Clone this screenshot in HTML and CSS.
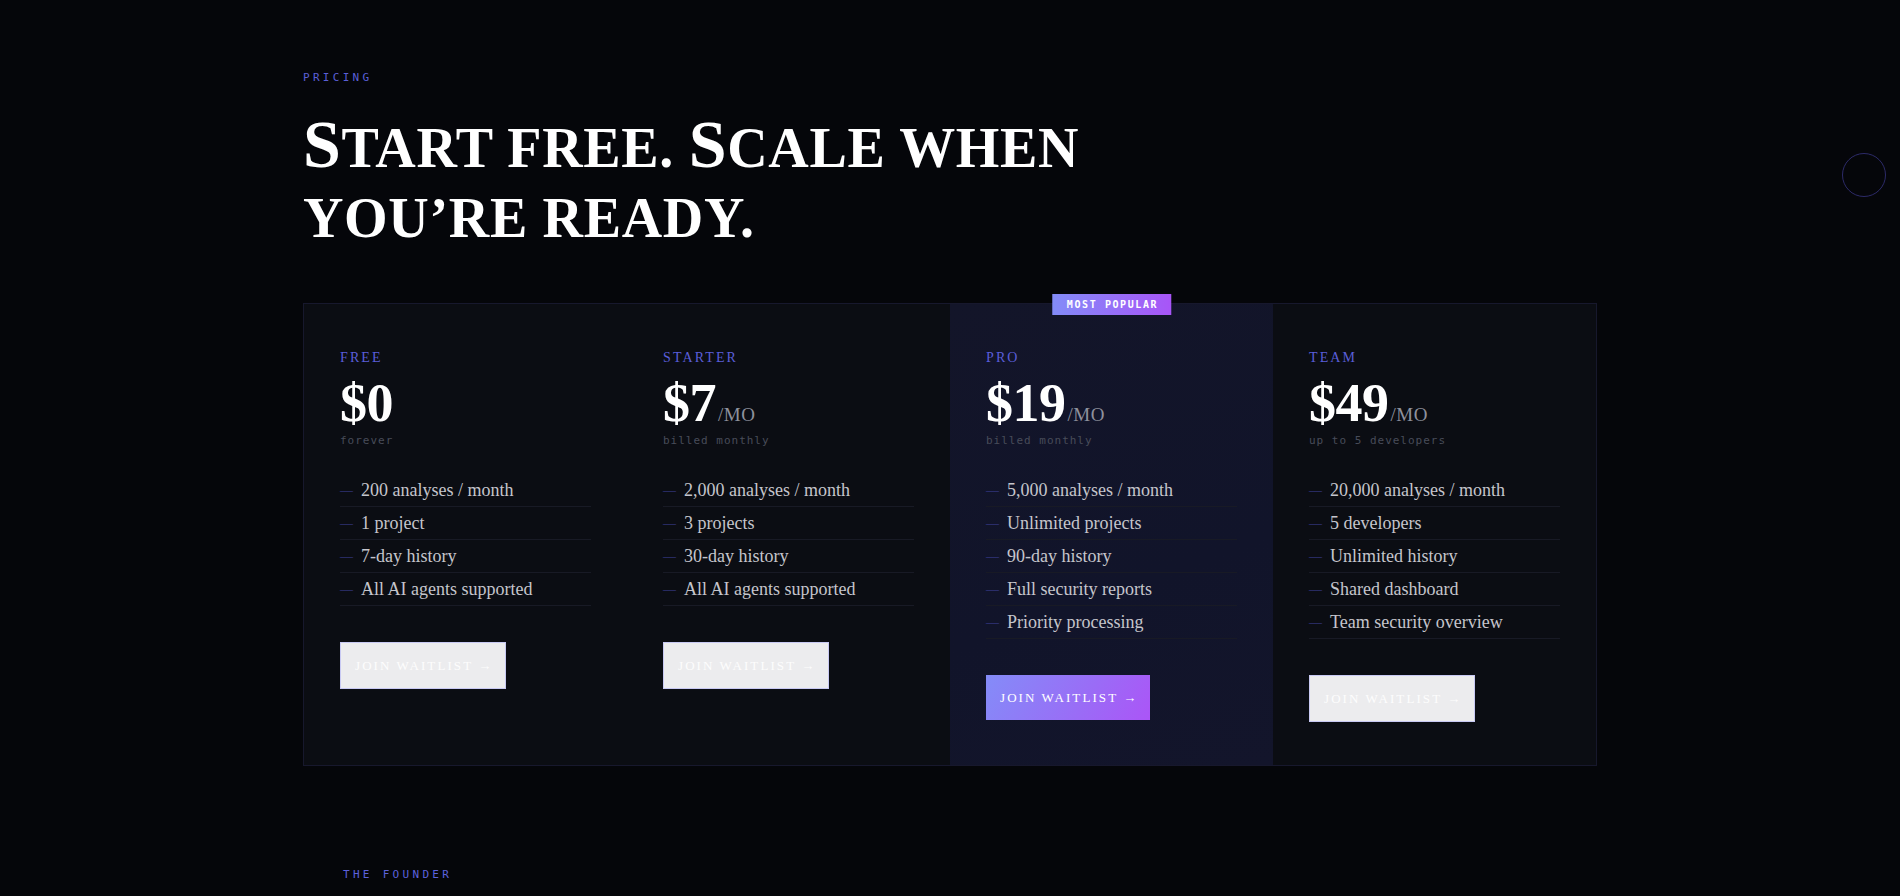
FILE: index.html
```html
<!DOCTYPE html>
<html lang="en">
<head>
    <meta charset="UTF-8">
    <meta name="viewport" content="width=device-width, initial-scale=1.0">
    <title>Pricing</title>
    <link rel="stylesheet" href="styles.css">
</head>
<body>

    <div class="cursor-ring"></div>

    <section class="pricing">
        <div class="container">
            <p class="eyebrow">Pricing</p>
            <h2 class="title"><span class="initial">S</span>tart free. <span class="initial">S</span>cale when<br>you&rsquo;re ready.</h2>

            <div class="plans">
                <!-- Free -->
                <div class="plan">
                    <p class="plan-name">Free</p>
                    <p class="plan-price">$0</p>
                    <p class="plan-note">forever</p>
                    <ul class="plan-features">
                        <li>200 analyses / month</li>
                        <li>1 project</li>
                        <li>7-day history</li>
                        <li>All AI agents supported</li>
                    </ul>
                    <a href="#" class="btn">Join waitlist &rarr;</a>
                </div>

                <!-- Starter -->
                <div class="plan">
                    <p class="plan-name">Starter</p>
                    <p class="plan-price">$7<span class="per">/mo</span></p>
                    <p class="plan-note">billed monthly</p>
                    <ul class="plan-features">
                        <li>2,000 analyses / month</li>
                        <li>3 projects</li>
                        <li>30-day history</li>
                        <li>All AI agents supported</li>
                    </ul>
                    <a href="#" class="btn">Join waitlist &rarr;</a>
                </div>

                <!-- Pro -->
                <div class="plan plan-featured">
                    <span class="badge">Most popular</span>
                    <p class="plan-name">Pro</p>
                    <p class="plan-price">$19<span class="per">/mo</span></p>
                    <p class="plan-note">billed monthly</p>
                    <ul class="plan-features">
                        <li>5,000 analyses / month</li>
                        <li>Unlimited projects</li>
                        <li>90-day history</li>
                        <li>Full security reports</li>
                        <li>Priority processing</li>
                    </ul>
                    <a href="#" class="btn btn-primary">Join waitlist &rarr;</a>
                </div>

                <!-- Team -->
                <div class="plan">
                    <p class="plan-name">Team</p>
                    <p class="plan-price">$49<span class="per">/mo</span></p>
                    <p class="plan-note">up to 5 developers</p>
                    <ul class="plan-features">
                        <li>20,000 analyses / month</li>
                        <li>5 developers</li>
                        <li>Unlimited history</li>
                        <li>Shared dashboard</li>
                        <li>Team security overview</li>
                    </ul>
                    <a href="#" class="btn">Join waitlist &rarr;</a>
                </div>
            </div>
        </div>
    </section>

    <section class="founder">
        <div class="container">
            <p class="eyebrow">The Founder</p>
        </div>
    </section>

</body>
</html>
```

FILE: styles.css
```css
/* Base */
body {
    font-family: "Liberation Serif", serif;
    background-color: #05060a;
    color: #fff;
    margin: 0;
    padding: 0;
}

p, ul {
    margin: 0;
    padding: 0;
}

.container {
    width: 1294px;
    margin: 0 auto;
}

/* Small mono labels above sections */
.eyebrow {
    font-family: "DejaVu Sans Mono", monospace;
    font-size: 11px;
    line-height: 16px;
    letter-spacing: 0.3em;
    text-transform: uppercase;
    color: #5a5fd6;
}

/* Pricing */
.pricing {
    padding-top: 70px;
}

.title {
    margin: 27px 0 50px;
    font-size: 56px;
    line-height: 70px;
    font-weight: bold;
    letter-spacing: 0.012em;
    text-transform: uppercase;
    color: #fff;
}

.title .initial {
    font-size: 68px;
    line-height: 0;
}

.plans {
    display: grid;
    grid-template-columns: repeat(4, 1fr);
    border: 1px solid #17182d;
    background-color: #0b0d13;
}

.plan {
    position: relative;
    padding: 44px 36px 43px;
}

.plan-featured {
    background: linear-gradient(160deg, #131529 0%, #11142a 60%, #13152b 100%);
}

.badge {
    position: absolute;
    top: -10px;
    left: 50%;
    transform: translateX(-50%);
    padding: 0 13px 0 15px;
    font-family: "DejaVu Sans Mono", monospace;
    font-size: 10px;
    font-weight: bold;
    line-height: 21px;
    letter-spacing: 0.16em;
    text-transform: uppercase;
    white-space: nowrap;
    color: #fff;
    background: linear-gradient(90deg, #838cf8, #a855f7);
}

.plan-name {
    font-size: 14px;
    line-height: 20px;
    letter-spacing: 0.15em;
    text-transform: uppercase;
    color: #5a5ed8;
}

.plan-price {
    margin-top: 8px;
    font-size: 54px;
    line-height: 54px;
    font-weight: bold;
    letter-spacing: -0.01em;
    color: #fff;
}

.plan-price .per {
    margin-left: 2px;
    font-size: 19px;
    font-weight: 400;
    line-height: 0;
    letter-spacing: 0.03em;
    text-transform: uppercase;
    color: #8e919d;
}

.plan-note {
    margin-top: 3px;
    font-family: "DejaVu Sans Mono", monospace;
    font-size: 11px;
    line-height: 16px;
    letter-spacing: 0.09em;
    color: #484c59;
}

.plan-features {
    list-style: none;
    margin-top: 25px;
}

.plan-features li {
    display: flex;
    align-items: center;
    gap: 8px;
    padding: 4px 0;
    font-size: 18px;
    line-height: 24px;
    color: #c5c5cc;
    border-bottom: 1px solid #181a25;
}

.plan-features li::before {
    content: "\2014";
    font-size: 13px;
    color: #3e429c;
}

/* Buttons */
.btn {
    display: inline-block;
    margin-top: 36px;
    padding: 15px 12px 15px 14px;
    font-size: 13px;
    line-height: 15px;
    letter-spacing: 0.16em;
    text-transform: uppercase;
    text-decoration: none;
    color: #fdfdfd;
    background-color: #ececee;
    border: 1px solid #c8c9f3;
}

.btn-primary {
    border: none;
    background: linear-gradient(120deg, #848cf8 0%, #9a6cf6 60%, #ab55f7 100%);
    color: #fff;
}

/* Founder */
.founder {
    padding-top: 101px;
}

.founder .eyebrow {
    padding-left: 40px;
    color: #5c61dc;
}

/* Cursor ring */
.cursor-ring {
    position: fixed;
    top: 153px;
    right: 14px;
    width: 44px;
    height: 44px;
    border: 1px solid #2d2b69;
    border-radius: 50%;
    box-sizing: border-box;
}
```
